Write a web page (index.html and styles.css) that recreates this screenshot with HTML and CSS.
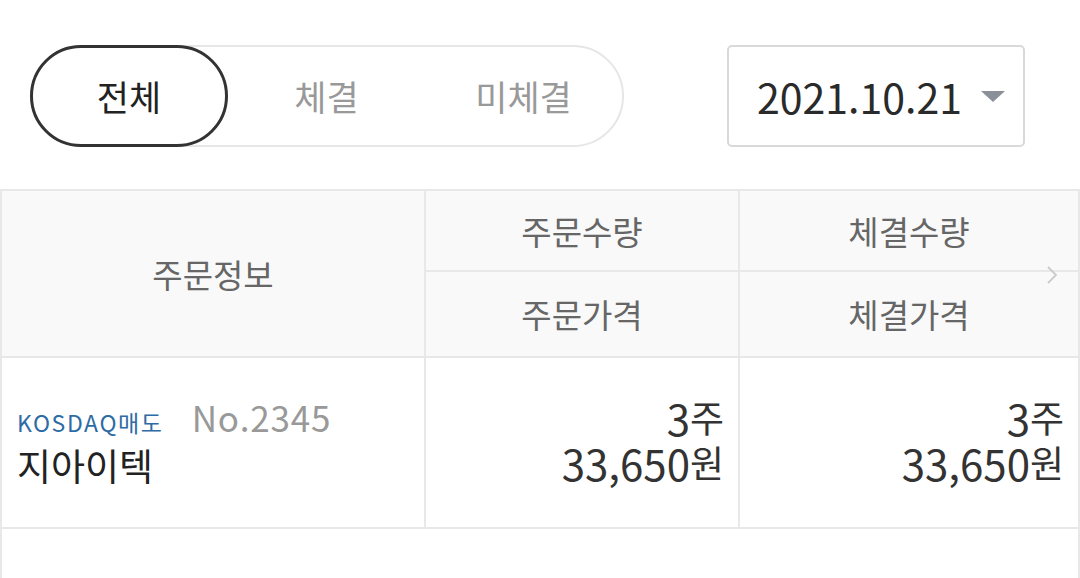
FILE: index.html
```html
<!DOCTYPE html>
<html lang="ko">
<head>
<meta charset="utf-8">
<link rel="stylesheet" href="styles.css">
</head>
<body>
<div class="top">
  <div class="seg">
    <div class="seg-item active">전체</div>
    <div class="seg-item">체결</div>
    <div class="seg-item">미체결</div>
  </div>
  <div class="date">
    <span class="date-text">2021.10.21</span>
    <svg class="caret" width="24" height="12" viewBox="0 0 24 12"><polygon points="0,0 24,0 12,11" fill="#8a8f98"/></svg>
  </div>
</div>
<div class="table">
  <div class="cell head info">주문정보</div>
  <div class="cell head">주문수량</div>
  <div class="cell head">체결수량</div>
  <div class="cell head">주문가격</div>
  <div class="cell head">체결가격</div>
  <div class="cell body-info">
    <div class="line1"><span class="market">KOSDAQ매도</span><span class="no">No.2345</span></div>
    <div class="name">지아이텍</div>
  </div>
  <div class="cell num"><div class="ln"><span class="d">3</span>주</div><div class="ln"><span class="d">33,650</span>원</div></div>
  <div class="cell num"><div class="ln"><span class="d">3</span>주</div><div class="ln"><span class="d">33,650</span>원</div></div>
  <div class="cell empty"></div>
  <svg class="chev" width="12" height="20" viewBox="0 0 12 20"><polyline points="2,2 10,10 2,18" fill="none" stroke="#cbcbcb" stroke-width="1.8"/></svg>
</div>
</body>
</html>
```

FILE: styles.css
```css
* { box-sizing: border-box; }
html, body { margin: 0; padding: 0; background: #fff; }
body {
  font-family: "Noto Sans CJK KR", "Noto Sans", sans-serif;
  font-weight: 400;
  width: 1080px;
  height: 578px;
  overflow: hidden;
}
.top {
  display: flex;
  justify-content: space-between;
  align-items: center;
  padding: 45px 55px 0 30px;
}
.seg {
  display: flex;
  width: 594px;
  height: 102px;
  border: 2px solid #e6e6e6;
  border-radius: 51px;
}
.seg-item {
  flex: 1;
  display: flex;
  align-items: center;
  justify-content: center;
  font-size: 35px;
  color: #999;
  margin: -2px 0;
  padding-bottom: 2px;
}
.seg-item.active {
  flex: 0 0 198px;
  margin-left: -2px;
  color: #222;
  border: 3px solid #333;
  border-radius: 51px;
}
.date {
  width: 298px;
  height: 102px;
  border: 2px solid #d9d9d9;
  border-radius: 5px;
  display: flex;
  align-items: center;
  padding-left: 28px;
  gap: 19px;
}
.date-text {
  font-size: 41px;
  color: #2a2a2a;
}
.caret { margin-top: 2px; }
.table {
  position: relative;
  margin-top: 42px;
  display: grid;
  grid-template-columns: 422px 312px 1fr;
  grid-template-rows: 79px 84px 169px 60px;
  gap: 2px;
  background: #e8e8e8;
  border: 2px solid #e8e8e8;
  border-bottom: none;
}
.cell {
  background: #fff;
}
.head {
  background: #f9f9f9;
  display: flex;
  align-items: center;
  justify-content: center;
  font-size: 33px;
  color: #666;
}
.head.info { grid-row: span 2; }
.body-info {
  display: flex;
  flex-direction: column;
  justify-content: center;
  padding-left: 15px;
  padding-bottom: 2px;
}
.line1 {
  display: flex;
  align-items: baseline;
  line-height: 42px;
}
.market {
  font-size: 23px;
  letter-spacing: 1.6px;
  color: #2d6ba5;
}
.no {
  font-size: 35px;
  color: #999;
  letter-spacing: 0.8px;
  margin-left: 28px;
}
.name {
  font-size: 37px;
  color: #222;
  line-height: 44px;
}
.num {
  display: flex;
  flex-direction: column;
  justify-content: center;
  align-items: flex-end;
  padding-right: 14px;
  font-size: 37px;
  color: #333;
  padding-bottom: 6px;
}
.ln {
  height: 45px;
  line-height: 45px;
}
.d {
  display: inline-block;
  font-size: 42px;
  line-height: 45px;
  height: 45px;
  vertical-align: top;
}
.empty { grid-column: span 3; }
.chev {
  position: absolute;
  right: 20px;
  top: 74px;
}
```
